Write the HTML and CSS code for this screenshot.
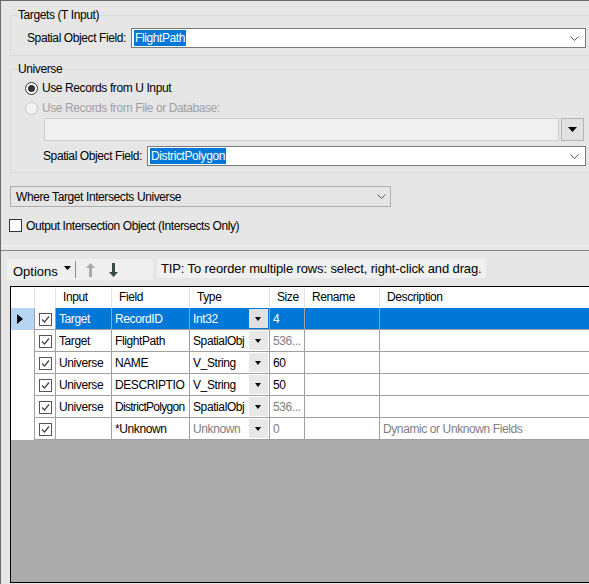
FILE: index.html
```html
<!DOCTYPE html>
<html lang="en">
<head>
    <meta charset="UTF-8">
    <title>Spatial Match</title>
    <link rel="stylesheet" href="styles.css">
</head>
<body>

<div class="app">
    <!-- Configuration panel -->
    <div class="top">
        <fieldset class="group targets">
            <legend>Targets (T Input)</legend>
            <div class="field-row">
                <label>Spatial Object Field:</label>
                <div class="combo">
                    <span class="sel">FlightPath</span>
                    <svg class="chev" width="9" height="5" viewBox="0 0 9 5"><path d="M0.5 0.5 L4.5 4.5 L8.5 0.5" fill="none" stroke="#555" stroke-width="1"/></svg>
                </div>
            </div>
        </fieldset>

        <fieldset class="group universe">
            <legend>Universe</legend>
            <div class="radio-row"><span class="radio on"></span>Use Records from U Input</div>
            <div class="radio-row disabled"><span class="radio"></span>Use Records from File or Database:</div>
            <div class="file-row">
                <div class="file-box"></div>
                <div class="file-btn"><svg width="9" height="5" viewBox="0 0 9 5"><path d="M0 0 H9 L4.5 5 Z" fill="#000"/></svg></div>
            </div>
            <div class="field-row indent">
                <label>Spatial Object Field:</label>
                <div class="combo">
                    <span class="sel">DistrictPolygon</span>
                    <svg class="chev" width="9" height="5" viewBox="0 0 9 5"><path d="M0.5 0.5 L4.5 4.5 L8.5 0.5" fill="none" stroke="#555" stroke-width="1"/></svg>
                </div>
            </div>
        </fieldset>

        <div class="select-box">
            <span>Where Target Intersects Universe</span>
            <svg class="chev" width="9" height="5" viewBox="0 0 9 5"><path d="M0.5 0.5 L4.5 4.5 L8.5 0.5" fill="none" stroke="#555" stroke-width="1"/></svg>
        </div>

        <div class="check-row"><span class="check"></span>Output Intersection Object (Intersects Only)</div>
    </div>

    <!-- Field list -->
    <div class="bottom">
        <div class="toolbar">
            <div class="tools">
                <span class="options">Options</span>
                <svg class="opt-arrow" width="7" height="4" viewBox="0 0 7 4"><path d="M0 0 H7 L3.5 4 Z" fill="#000"/></svg>
                <span class="tool-sep"></span>
                <svg class="arrow" width="9" height="14" viewBox="0 0 9 14"><path d="M4.5 0 L9 5 H6 V14 H3 V5 H0 Z" fill="#a9a9a9"/></svg>
                <svg class="arrow" width="9" height="14" viewBox="0 0 9 14"><path d="M4.5 14 L9 9 H6 V0 H3 V9 H0 Z" fill="#3d4a42"/></svg>
            </div>
            <div class="tip">TIP: To reorder multiple rows: select, right-click and drag.</div>
        </div>

        <div class="grid">
            <table>
                <thead>
                    <tr>
                        <th class="rh"></th>
                        <th class="ck"></th>
                        <th class="c-input">Input</th>
                        <th class="c-field">Field</th>
                        <th class="c-type">Type</th>
                        <th class="c-size">Size</th>
                        <th class="c-rename">Rename</th>
                        <th class="c-desc">Description</th>
                    </tr>
                </thead>
                <tbody>
                    <tr class="selected">
                        <td class="rh"><svg width="6" height="10" viewBox="0 0 6 10"><path d="M0 0 L6 5 L0 10 Z" fill="#000"/></svg></td>
                        <td class="ck"><span class="cb"></span></td>
                        <td>Target</td>
                        <td>RecordID</td>
                        <td class="type"><span>Int32</span><span class="dd"></span></td>
                        <td>4</td>
                        <td></td>
                        <td></td>
                    </tr>
                    <tr>
                        <td class="rh"></td>
                        <td class="ck"><span class="cb"></span></td>
                        <td>Target</td>
                        <td>FlightPath</td>
                        <td class="type"><span>SpatialObj</span><span class="dd"></span></td>
                        <td class="dim">536...</td>
                        <td></td>
                        <td></td>
                    </tr>
                    <tr>
                        <td class="rh"></td>
                        <td class="ck"><span class="cb"></span></td>
                        <td>Universe</td>
                        <td>NAME</td>
                        <td class="type"><span>V_String</span><span class="dd"></span></td>
                        <td>60</td>
                        <td></td>
                        <td></td>
                    </tr>
                    <tr>
                        <td class="rh"></td>
                        <td class="ck"><span class="cb"></span></td>
                        <td>Universe</td>
                        <td>DESCRIPTIO</td>
                        <td class="type"><span>V_String</span><span class="dd"></span></td>
                        <td>50</td>
                        <td></td>
                        <td></td>
                    </tr>
                    <tr>
                        <td class="rh"></td>
                        <td class="ck"><span class="cb"></span></td>
                        <td>Universe</td>
                        <td class="tight">DistrictPolygon</td>
                        <td class="type"><span>SpatialObj</span><span class="dd"></span></td>
                        <td class="dim">536...</td>
                        <td></td>
                        <td></td>
                    </tr>
                    <tr>
                        <td class="rh"></td>
                        <td class="ck"><span class="cb"></span></td>
                        <td></td>
                        <td>*Unknown</td>
                        <td class="type dim"><span>Unknown</span><span class="dd"></span></td>
                        <td class="dim">0</td>
                        <td></td>
                        <td class="dim">Dynamic or Unknown Fields</td>
                    </tr>
                </tbody>
            </table>
        </div>
    </div>
</div>

</body>
</html>
```

FILE: styles.css
```css
body {
    margin: 0;
    font-family: "Liberation Sans", Arial, sans-serif;
    font-size: 12px;
    letter-spacing: -0.4px;
    color: #000;
    background: #e6e6e6;
}
.app {
    width: 589px;
    height: 584px;
    box-sizing: border-box;
    border-left: 1px solid #6b6b6b;
    border-top: 1px solid #6b6b6b;
    display: flex;
    flex-direction: column;
    overflow: hidden;
    background: #e6e6e6;
}

/* top panel */
.top {
    height: 245px;
    flex: none;
    box-sizing: border-box;
    padding-left: 9px;
    border-bottom: 1px solid #f2f2f2;
    white-space: nowrap;
}
.group {
    margin: 6px 0 0 0;
    padding: 0 3px 6px 6px;
    border: 1px solid #d9d9d9;
    border-right: none;
    min-width: 0;
}
.group.targets {
    margin-top: 7px;
    padding-bottom: 7px;
}
.group legend {
    padding: 0 1px;
    line-height: 14px;
}
.field-row {
    display: flex;
    align-items: center;
    margin: 6px 0 0 10px;
}
.field-row.indent {
    margin: 5px 0 0 26px;
}
.field-row label {
    width: 104px;
    flex: none;
}
.combo {
    flex: 1;
    height: 20px;
    box-sizing: border-box;
    border: 1px solid #7a7a7a;
    background: #fff;
    display: flex;
    align-items: center;
    padding-left: 2px;
}
.sel {
    background: #0078d7;
    color: #fff;
    padding: 1px 1px;
    line-height: 14px;
}
.chev {
    margin-left: auto;
    margin-right: 6px;
}

.radio-row {
    display: flex;
    align-items: center;
    height: 20px;
    margin-left: 8px;
    gap: 4px;
}
.radio-row:first-of-type {
    margin-top: 2px;
}
.radio {
    width: 13px;
    height: 13px;
    box-sizing: border-box;
    border: 1px solid #333;
    border-radius: 50%;
    background: #fff;
    display: flex;
    align-items: center;
    justify-content: center;
}
.radio.on::after {
    content: "";
    width: 7px;
    height: 7px;
    border-radius: 50%;
    background: #333;
}
.radio-row.disabled {
    color: #a0a0a0;
}
.radio-row.disabled .radio {
    border-color: #c6c6c6;
    background: #f4f4f4;
}
.file-row {
    display: flex;
    height: 23px;
    margin: 0 2px 0 27px;
    gap: 2px;
}
.file-box {
    flex: 1;
    border: 1px solid #cccccc;
    background: #f0f0f0;
}
.file-btn {
    width: 23px;
    box-sizing: border-box;
    border: 1px solid #b4b4b4;
    background: #e1e1e1;
    display: flex;
    align-items: center;
    justify-content: center;
}

.select-box {
    margin-top: 13px;
    width: 381px;
    height: 21px;
    box-sizing: border-box;
    border: 1px solid #adadad;
    background: #e5e5e5;
    display: flex;
    align-items: center;
    padding-left: 5px;
}
.select-box .chev {
    margin-right: 4px;
}
.check-row {
    display: flex;
    align-items: center;
    margin: 12px 0 0 -1px;
    gap: 4px;
    height: 13px;
}
.check {
    width: 13px;
    height: 13px;
    box-sizing: border-box;
    border: 1px solid #333;
    background: #fff;
}

/* bottom panel */
.bottom {
    flex: 1;
    margin-top: 4px;
    border-top: 1px solid #858585;
    display: flex;
    flex-direction: column;
    padding-left: 6px;
    min-height: 0;
}
.toolbar {
    display: flex;
    align-items: flex-start;
    gap: 4px;
    margin-top: 8px;
    height: 22px;
    flex: none;
    letter-spacing: 0;
}
.tools {
    width: 146px;
    height: 21px;
    box-sizing: border-box;
    background: #efefef;
    display: flex;
    align-items: center;
    padding-left: 6px;
}
.options {
    font-size: 13px;
    margin-top: 4px;
}
.opt-arrow {
    margin: 0 0 4px 6px;
}
.tool-sep {
    width: 1px;
    height: 17px;
    background: #8a8a8a;
    margin: 0 10px 0 4px;
}
.arrow {
    margin-right: 14px;
}
.tip {
    height: 19px;
    line-height: 19px;
    padding: 0 4px;
    background: #f0f0f0;
    font-size: 13px;
    letter-spacing: -0.12px;
}

.grid {
    flex: 1;
    margin: 5px 0 1px 3px;
    border: 1px solid #000;
    border-right: none;
    background: #ababab;
    overflow: hidden;
}
.grid table {
    border-collapse: collapse;
    table-layout: fixed;
    width: 600px;
}
.grid th {
    background: #fff;
    font-weight: normal;
    text-align: left;
    height: 20px;
    padding: 0 0 0 7px;
    border-right: 1px solid #e3e3e3;
    border-bottom: 1px solid #fff;
}
.grid td {
    height: 21px;
    padding: 0 0 0 3px;
    background: #fff;
    border-right: 1px solid #a0a0a0;
    border-bottom: 1px solid #a0a0a0;
    white-space: nowrap;
    overflow: hidden;
}
.grid td.tight {
    letter-spacing: -0.7px;
}
.grid .rh { width: 23px; padding: 0; }
.grid .ck { width: 20px; padding: 0; text-align: center; }
.grid .c-input { width: 48px; }
.grid .c-field { width: 70px; }
.grid .c-type { width: 72px; }
.grid .c-size { width: 27px; }
.grid .c-rename { width: 67px; }
.grid td.rh {
    border-bottom: none;
    padding-left: 6px;
}
.grid td.rh svg {
    display: block;
}
.cb {
    display: inline-block;
    width: 13px;
    height: 13px;
    box-sizing: border-box;
    border: 1px solid #555;
    background: #fff url("data:image/svg+xml,%3Csvg xmlns='http://www.w3.org/2000/svg' width='11' height='11'%3E%3Cpath d='M2 5.5 L4.5 8 L9 2.5' fill='none' stroke='%23444' stroke-width='1.2'/%3E%3C/svg%3E") center no-repeat;
    vertical-align: middle;
}
.type {
    position: relative;
}
.dd {
    position: absolute;
    right: 1px;
    top: 1px;
    bottom: 1px;
    width: 19px;
    background: #e8e8e8;
}
.dd::after {
    content: "";
    position: absolute;
    left: 6px;
    top: 8px;
    border-left: 3.5px solid transparent;
    border-right: 3.5px solid transparent;
    border-top: 4px solid #000;
}
.dim {
    color: #808080;
}
tr.selected td {
    background: #0078d7;
    color: #fff;
}
tr.selected td.rh {
    background: #b5d5f2;
}
tr.selected td.ck {
    background: #fff;
}
tr.selected .dd {
    background: #e1e1e1;
}
```
